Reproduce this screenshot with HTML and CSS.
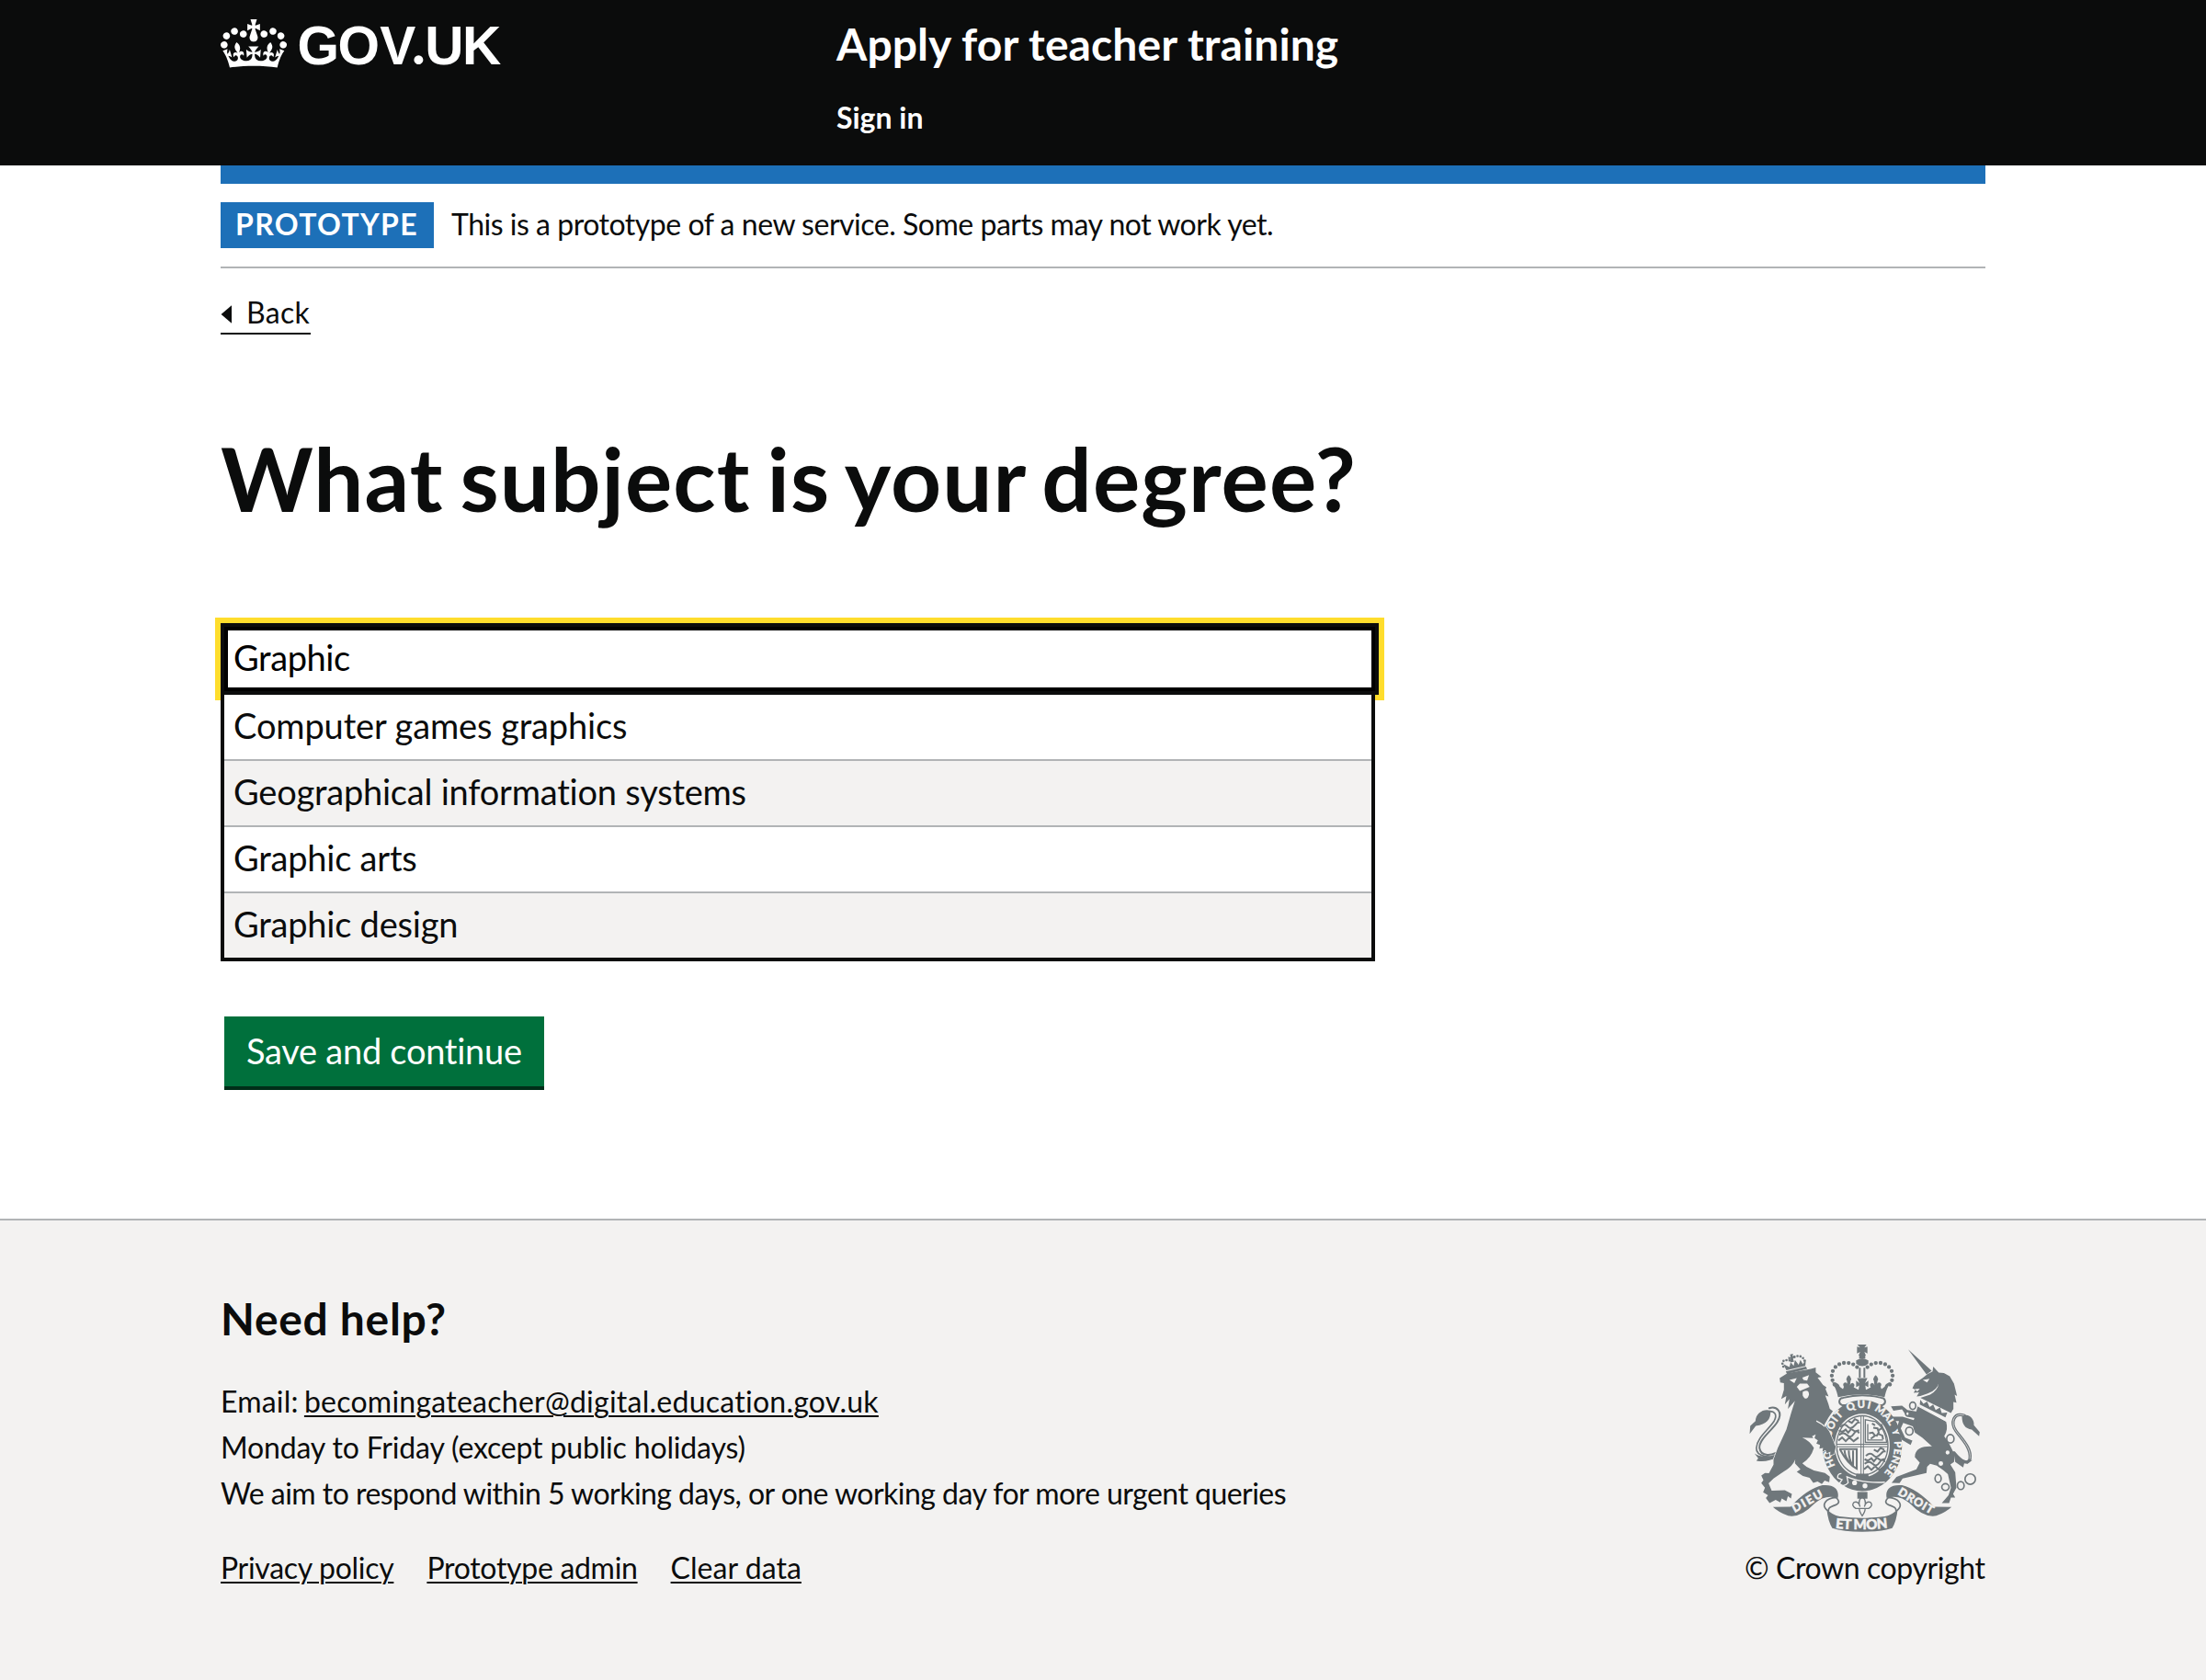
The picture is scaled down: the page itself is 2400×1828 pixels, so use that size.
FILE: index.html
```html
<!DOCTYPE html>
<html lang="en">
<head>
<meta charset="utf-8">
<title>What subject is your degree? - Apply for teacher training</title>
<link rel="stylesheet" href="styles.css">
</head>
<body>
<header class="header">
  <div class="container header-grid">
    <a class="logo" href="#">
      <svg class="logo-crown" viewBox="0 0 132 97" aria-hidden="true"><path fill="currentColor" fill-rule="evenodd" d="M25 30.2c3.5 1.5 7.7-.2 9.1-3.7 1.5-3.6-.2-7.8-3.9-9.2-3.6-1.4-7.6.3-9.1 3.9-1.4 3.5.3 7.5 3.9 9zM9 39.5c3.6 1.5 7.8-.2 9.2-3.7 1.5-3.6-.2-7.8-3.9-9.1-3.6-1.5-7.6.2-9.1 3.8-1.4 3.5.3 7.5 3.8 9zM4.4 57.2c3.5 1.5 7.7-.2 9.1-3.8 1.5-3.6-.2-7.7-3.9-9.1-3.5-1.5-7.6.3-9.1 3.8-1.4 3.5.3 7.6 3.9 9.1zm38.3-21.4c3.5 1.5 7.7-.2 9.1-3.8 1.5-3.6-.2-7.7-3.9-9.1-3.6-1.5-7.6.3-9.1 3.8-1.3 3.6.4 7.7 3.9 9.1zm64.4-5.6c-3.6 1.5-7.8-.2-9.1-3.7-1.5-3.6.2-7.8 3.8-9.2 3.6-1.4 7.7.3 9.2 3.9 1.3 3.5-.4 7.5-3.9 9zm15.9 9.3c-3.6 1.5-7.7-.2-9.1-3.7-1.5-3.6.2-7.8 3.7-9.1 3.6-1.5 7.7.2 9.2 3.8 1.5 3.5-.3 7.5-3.8 9zm4.7 17.7c-3.6 1.5-7.8-.2-9.2-3.8-1.5-3.6.2-7.7 3.9-9.1 3.6-1.5 7.7.3 9.2 3.8 1.3 3.5-.4 7.6-3.9 9.1zM89.3 35.8c-3.6 1.5-7.8-.2-9.2-3.8-1.4-3.6.2-7.7 3.9-9.1 3.6-1.5 7.7.3 9.2 3.8 1.4 3.6-.3 7.7-3.9 9.1zM69.7 17.7l8.9 4.7V9.3l-8.9 2.8c-.2-.3-.5-.6-.9-.9L72.4 0H59.6l3.5 11.2c-.3.3-.6.5-.9.9l-8.8-2.8v13.1l8.8-4.7c.3.3.6.7.9.9l-5 15.4v.1c-.2.8-.4 1.6-.4 2.4 0 4.1 3.1 7.5 7 8.1h.2c.3 0 .7.1 1 .1.4 0 .7 0 1-.1h.2c4-.6 7.1-4.1 7.1-8.1 0-.8-.1-1.7-.4-2.4V34l-5.1-15.4c.4-.2.7-.6 1-.9zM66 92.8c16.9 0 32.8 1.1 47.1 3.2 4-16.9 8.9-26.7 14-33.5l-9.6-3.4c1 4.9 1.1 7.2 0 10.2-1.5-1.4-3-4.3-4.2-8.7L108.6 76c2.8-2 5-3.2 7.5-3.3-4.4 9.4-10 11.9-13.6 11.2-4.3-.8-6.3-4.6-5.6-7.9 1-4.7 5.7-5.9 8-.5 4.3-8.7-3-11.4-7.6-8.8 7.1-7.2 7.9-13.5 2.1-21.1-8 6.1-8.1 12.3-4.5 20.8-4.7-5.4-12.1-2.5-9.5 6.2 3.4-5.2 7.9-2 7.2 3.1-.6 4.3-6.4 7.8-13.5 7.2-10.3-.9-10.9-8-11.2-13.8 2.5-.5 7.1 1.8 11 7.3L80.2 60c-4.1 4.4-8 5.3-12.3 5.4 1.4-4.4 8-11.6 8-11.6H55.5s6.4 7.2 7.9 11.6c-4.2-.1-8-1-12.3-5.4l1.4 16.4c3.9-5.5 8.5-7.7 10.9-7.3-.3 5.8-.9 12.8-11.1 13.8-7.2.6-12.9-2.9-13.5-7.2-.7-5 3.8-8.3 7.1-3.1 2.7-8.7-4.6-11.6-9.4-6.2 3.7-8.5 3.6-14.7-4.6-20.8-5.8 7.6-5 13.9 2.2 21.1-4.7-2.6-11.9.1-7.7 8.8 2.3-5.5 7.1-4.2 8.1.5.7 3.3-1.3 7.1-5.7 7.9-3.5.7-9-1.8-13.5-11.2 2.5.1 4.7 1.3 7.5 3.3l-4.7-15.4c-1.2 4.4-2.7 7.2-4.3 8.7-1.1-3-.9-5.3 0-10.2l-9.5 3.4c5 6.9 9.9 16.7 14 33.5 14.8-2.1 30.8-3.2 47.7-3.2z"/></svg>
      <svg class="logo-name" viewBox="0 -12 230 84"><text class="logo-text" y="48.8" x="1.6 45.5 91.3 126.2 140.2 181">GOV<tspan class="logo-dot">.</tspan>UK</text></svg>
    </a>
    <div>
      <a class="service-name" href="#">Apply for teacher training</a>
      <nav><a class="nav-link" href="#">Sign in</a></nav>
    </div>
  </div>
</header>

<div class="container">
  <div class="bar"></div>
  <div class="phase"><strong class="tag">PROTOTYPE</strong><span class="phase-text">This is a prototype of a new service. Some parts may not work yet.</span></div>
  <a class="back" href="#"><svg class="back-arrow" viewBox="0 0 12 20" aria-hidden="true"><path fill="currentColor" d="M12 .3v19.4L.6 10z"/></svg><span>Back</span></a>
  <main>
    <h1 class="title">What subject is your degree?</h1>
    <div class="autocomplete">
      <input class="field" type="text" value="Graphic" aria-label="Subject">
      <ul class="menu">
        <li class="option option-first">Computer games graphics</li>
        <li class="option">Geographical information systems</li>
        <li class="option">Graphic arts</li>
        <li class="option">Graphic design</li>
      </ul>
    </div>
    <button class="button" type="button">Save and continue</button>
  </main>
</div>

<footer class="footer">
  <div class="container footer-grid">
    <div>
      <h2 class="help">Need help?</h2>
      <div class="contact">
        <p><span class="mail-label">Email:</span> <a class="link mail" href="#">becomingateacher@digital.education.gov.uk</a></p>
        <p class="hours">Monday to Friday (except public holidays)</p>
        <p class="respond">We aim to respond within 5 working days, or one working day for more urgent queries</p>
      </div>
      <nav class="links"><a class="link" href="#">Privacy policy</a><a class="link" href="#">Prototype admin</a><a class="link link-clear" href="#">Clear data</a></nav>
    </div>
    <div class="copyright">
      <svg class="arms" viewBox="60 60 780 640" aria-hidden="true">
        <defs>
          <path id="motto" d="M438 525A105 123 0 0 1 333 402A105 123 0 0 1 438 279A105 123 0 0 1 543 402A105 123 0 0 1 438 525"/>
          <path id="scroll" d="M350 672Q438 682 530 670"/>
          <path id="half" d="M421 146C405 128 368 126 350 146C332 166 336 192 356 214"/>
        </defs>
        <!-- royal crown -->
        <path class="g" d="M422 72h30l-7 10 10-3v22l-10-5 5 12h-24l5-12-10 5V79l10 3zM428 106h20v12h-20zM418 124q20-12 40 0v10q-20 18-40 0zM427 148h6v32h-6zM442 148h6v32h-6z"/>
        <use href="#half" class="beads"/><use href="#half" class="beads" transform="matrix(-1 0 0 1 876 0)"/>
        <path class="g" d="M345 196q15 0 20 14l10 8 3-8q-6-12 4-14 8 0 8 10l-2-16q-6-8 6-18 12 10 6 18l-2 16q2-10 10-8 8 4 2 14l16 8 2-14-10 6v-22l11 8-8-16h34l-8 16 11-8v22l-10-6 2 14 16-8q-6-10 2-14 8-2 10 8l-2-16q-6-8 6-18 12 10 6 18l-2 16q0-10 8-10 10 2 4 14l3 8 10-8q5-14 20-14-14 18-20 48-76-18-152 0-6-30-20-48z"/>
        <path class="l" d="M372 270c-14-6-10-24 4-24q62-16 124 0c14 0 18 18 4 24z" stroke-width="6"/>
        <!-- garter and shield -->
        <path class="g" fill-rule="evenodd" d="M438 253a130 149 0 1 0 .1 0zM438 298a90 104 0 1 1-.1 0z"/>
        <path class="l" stroke-width="4" d="M438 305a84 97 0 1 0 .1 0z"/>
        <path class="l" stroke-width="3" d="M434 306v190M442 306v190M354 398h168M354 406h168"/>
        <g id="lions"><path class="l" stroke-width="6" d="M366 342q14-14 24-2t24-4 14-6M362 352q10 10 22-2l8 10 10-12 12 8 14-4M362 368q14-12 26 0t22-4 18-2M360 386l12-10 12 12 12-12 14 12 16-12M392 322l12 6 10-12 12 6"/></g>
        <use href="#lions" transform="translate(84 94)"/>
        <path class="l" stroke-width="4" d="M448 318v74h70q-4-44-36-68zM456 332v52h50"/>
        <path class="l" stroke-width="6" d="M466 380l14-10-8-10-12 2M474 344l14 2 4 14-8 12M492 352l12-8-4-12M490 364l14 6 2 12M470 330l10 6"/>
        <path class="l" stroke-width="6" d="M366 414h54v64q-30-16-54-62zM380 418q2 24 18 40M394 418q0 28 12 48M408 418v54"/>
        <path class="g" d="M420 494l36 0 6 16h-48z"/>
        <path class="w" d="M370 494q-14 0-12 14l14 6-10 14q16 12 30-4l-4-20q50 22 124 18" stroke-width="4"/>
        <circle class="f" cx="413" cy="524" r="8"/><circle class="f" cx="447" cy="534" r="8"/>
        <g class="motto"><text><textPath href="#motto" startOffset="110" textLength="54">HO</textPath></text>
        <text><textPath href="#motto" startOffset="208" textLength="84">SOIT</textPath></text>
        <text><textPath href="#motto" startOffset="310" textLength="74">QUI</textPath></text>
        <text><textPath href="#motto" startOffset="398" textLength="74">MAL</textPath></text>
        <text><textPath href="#motto" startOffset="485">Y</textPath></text>
        <text><textPath href="#motto" startOffset="524" textLength="112">PENSE</textPath></text></g>
        <!-- lion -->
        <g transform="translate(30 60)">
          <path class="s" stroke-width="6" d="M150 350C110 384 76 376 72 350C70 322 114 292 130 266C152 230 126 212 104 220"/>
          <path class="s" stroke-width="5" d="M140 372C112 388 60 378 62 350C64 316 102 290 120 262C132 240 120 230 106 230"/>
          <path class="g" d="M108 228C86 220 60 236 59 262L42 278 40 304 60 278Q112 270 108 228zM128 370Q84 386 56 368L68 384 62 392Q98 398 130 380z"/>
          <path class="g halo" d="M138 122L163 106 240 92 256 87V103L275 118 262 120 280 144 291 152 288 158 298 182 287 178 297 205 302 222 312 230 298 250 284 274 300 296 314 328 318 340 322 345 316 370 303 374 304 362 292 368 288 357 278 362 280 350 268 352 270 340 258 336 263 325 252 318 256 306 244 312 248 318 212 316Q236 326 250 350 240 384 212 400L226 412 250 424 286 432 302 444 300 462 285 457 276 468 262 460 248 464 236 448 214 442 194 428 206 420 188 400 192 352Q200 400 150 428L118 450 102 466 112 490 155 488 178 500 175 515 165 508 160 524 145 515 140 528 125 520 105 530 93 514 100 505 84 495 90 480 78 465 85 455 78 440 90 432 103 433 118 405 118 388 132 350 160 290 176 234 188 196 165 222 170 190 155 208 160 180 143 190 152 160 152 138 140 136z"/>
          <path class="w" stroke-width="4" d="M258 262q16 8 28 18"/>
          <path class="f" d="M170 128l24-6-8 16zM212 120l22-8-6 18-12-2zM194 150l10-10 24 0 8 10-14 6-18 8zM214 166q20-10 20 10-4 16-14 12-10-8-6-22z"/>
          <path class="g" d="M150 76l10 20 62-14 2-22-10 16-8-14-6 16-12-16-4 20-10-12-4 16zM158 100l66-16 4 8-66 16zM172 44l10-2-2 8 8-2 1 8-8 0 4 12-12 2 0-12-6 4-1-10 8 2z"/>
          <path class="beads small" d="M150 84C142 68 150 60 172 64M178 58C196 42 220 50 220 72"/>
        </g>
        <!-- unicorn -->
        <g transform="translate(420 60)">
          <path class="s" stroke-width="10" d="M352 244C316 232 306 268 324 294C342 320 376 350 370 386C364 404 344 398 318 366"/>
          <path class="w" stroke-width="2" d="M352 244C316 232 306 268 324 294C342 320 376 350 370 386"/>
          <path class="g" d="M344 248C362 232 386 254 383 276L402 298 400 312 376 290Q344 286 344 248zM318 372L352 392 378 390 362 402 352 398 348 414 322 396z"/>
          <path class="g" d="M168 28L245 98 228 110zM182 155L190 138 215 122 232 108 248 100 250 84 268 104 285 105 304 116 318 140 328 180 320 176 326 202 316 200 316 222 308 236 208 186 240 176Q266 160 268 138 264 160 232 172L208 180 196 182 204 168 186 170 192 160z"/>
          <path class="g" d="M200 212L292 264Q300 290 286 312L302 336 320 372 318 396 306 404 322 430 326 480 315 500 322 512 308 512 302 530 278 530 300 505 308 480 298 436 284 424 262 408 240 402 230 412 228 432 150 450 140 465 114 464 130 445 195 420 206 398 190 380C190 352 215 344 246 345L214 316 190 300 182 275z"/>
          <path class="g" d="M198 254L164 248 148 224 120 228 112 214 148 212 166 226 202 232zM196 284L152 268 144 286 158 316 182 326 176 340 148 324 132 284 138 262 124 262 116 248 150 248 196 262z"/>
          <path class="w" stroke-width="4" d="M206 190L302 240 292 262 202 214z"/>
          <path class="g" d="M208 192l10 14 12-8 8 18 12-8 8 18 14-8 6 18 18-2-6 16-84-42z"/>
          <path class="f" d="M216 128l22-4-8 12zM190 158l16-2-8 10z"/>
          <g class="ring"><ellipse cx="183" cy="212" rx="10" ry="12"/><ellipse cx="166" cy="238" rx="6" ry="7"/><ellipse cx="172" cy="295" rx="12" ry="13"/><ellipse cx="306" cy="320" rx="12" ry="14"/><ellipse cx="297" cy="365" rx="9" ry="9"/><ellipse cx="275" cy="401" rx="10" ry="10"/><ellipse cx="266" cy="450" rx="10" ry="13"/><ellipse cx="290" cy="478" rx="12" ry="11"/><ellipse cx="340" cy="473" rx="11" ry="13"/><circle cx="371" cy="452" r="17"/></g>
        </g>
        <!-- scroll -->
        <path class="l" stroke-width="5" d="M352 572C362 580 366 590 352 596C330 604 326 606 328 618M352 572C320 574 300 596 326 616M524 572C514 580 510 590 524 596C546 604 550 606 548 618M524 572C556 574 576 596 550 616"/>
        <path class="g" d="M146 603L204 602Q258 544 308 532C348 528 364 548 358 574Q318 560 282 592 236 640 196 632 164 620 146 603zM730 603L672 602Q618 544 568 532C528 528 512 548 518 574Q558 560 594 592 640 640 680 632 712 620 730 603zM322 610Q340 630 364 634 438 644 512 634 536 630 554 610 550 650 536 672 500 684 438 684 376 684 340 672 326 650 322 610z"/>
        <text class="scroll" x="258" y="597" text-anchor="middle" textLength="108" transform="rotate(-29 258 584)">DIEU</text>
        <text class="scroll" x="614" y="596" text-anchor="middle" textLength="128" transform="rotate(31 614 583)">DROIT</text>
        <text class="scroll scroll-base"><textPath href="#scroll" textLength="172">ET MON</textPath></text>
        <!-- fleur-de-lis -->
        <path class="g" d="M422 554h33v22h-33z"/>
        <path class="l" stroke-width="4" d="M438 568q-16 16-7 34-6-20-20-14-10 10 6 20h12q-2 8 9 24 11-16 9-24h12q16-10 6-20-14-6-20 14 9-18-7-34zM426 608h24"/>
      </svg>
      <a class="copyright-text" href="#">© Crown copyright</a>
    </div>
  </div>
</footer>
</body>
</html>
```
FILE: styles.css
```css
* { box-sizing: border-box; }
body { margin: 0; background: #fff; color: #0b0c0c; font-family: Lato, "Noto Sans", sans-serif; font-size: 32px; line-height: 50px; }
a { color: inherit; text-decoration: none; }
h1, h2, p, ul { margin: 0; padding: 0; font-weight: inherit; }
svg { display: block; }
.container { width: 1920px; margin: 0 auto; }

.header { height: 180px; background: #0b0c0c; color: #fff; font-weight: 700; }
.header-grid { display: grid; grid-template-columns: 670px 1fr; padding-top: 18px; }
.logo { display: flex; align-items: flex-start; gap: 10px; padding-top: 3px; }
.logo-crown { width: 72px; height: 53px; }
.logo-name { width: 230px; height: 84px; margin-top: -12px; }
.logo-text { fill: #fff; font: 700 58.5px "Liberation Sans", Arial, sans-serif; }
.logo-dot { font-family: Lato, sans-serif; font-weight: 900; font-size: 60px; }
.service-name { display: block; font-size: 48px; line-height: 60px; letter-spacing: .09px; }
.nav-link { display: block; margin-top: 30px; line-height: 40px; }

.bar { height: 20px; background: #1d70b8; }
.phase { display: flex; gap: 19px; padding: 20px 0; border-bottom: 2px solid #b1b4b6; line-height: 48px; }
.tag { width: 232px; height: 50px; padding-left: 16px; background: #1d70b8; color: #fff; letter-spacing: 1.35px; }
.phase-text { letter-spacing: -.48px; }
.back { display: flex; align-items: flex-start; gap: 16px; width: 98px; height: 44px; margin-top: 28px; border-bottom: 2px solid #0b0c0c; line-height: 40px; letter-spacing: .3px; }
.back-arrow { width: 12px; height: 20px; margin-top: 12px; }

.title { margin-top: 106px; font-size: 96px; line-height: 100px; font-weight: 700; letter-spacing: 1.1px; word-spacing: -6.5px; }
.autocomplete { margin-top: 108px; font-size: 38px; letter-spacing: -.22px; }
.field { display: block; width: 1260px; height: 78px; padding: 0 0 4px 10px; border: 4px solid #0b0c0c; border-radius: 0; outline: 0; background: #fff; box-shadow: inset 0 0 0 4px #000, 0 0 0 6px #ffdd2c; color: #000; font: inherit; letter-spacing: -.4px; }
.menu { position: relative; width: 1256px; border: 4px solid #0b0c0c; border-top: 0; background: #fff; list-style: none; }
.option { height: 72px; padding-left: 10px; border-bottom: 2px solid #b1b4b6; line-height: 67px; }
.option-first { letter-spacing: -.12px; }
.option:nth-child(even) { background: #f3f2f1; }
.option:last-child { height: 70px; border-bottom: 0; }
.button { display: block; width: 348px; height: 76px; margin: 60px 0 0 4px; padding: 0 0 2px 24px; border: 0; background: #00703c; box-shadow: 0 4px 0 #002d18; color: #fff; font: inherit; font-size: 38px; letter-spacing: -.27px; text-align: left; }

.footer { height: 502px; margin-top: 144px; padding-top: 77px; border-top: 2px solid #b1b4b6; background: #f3f2f1; }
.footer-grid { display: grid; grid-template-columns: 1fr 262px; align-items: end; }
.help { font-size: 48px; line-height: 60px; font-weight: 700; letter-spacing: .69px; }
.contact { margin-top: 35px; }
.mail-label { letter-spacing: .2px; }
.mail { margin-left: -2px; letter-spacing: .25px; }
.hours { letter-spacing: -.16px; }
.respond { letter-spacing: -.53px; }
.links { display: flex; gap: 36px; margin-top: 36px; line-height: 40px; letter-spacing: -.3px; }
.link { text-decoration: underline; text-decoration-thickness: 2px; text-underline-offset: 3px; }
.link-clear { letter-spacing: .04px; }
.copyright { line-height: 40px; }
.arms { width: 260px; height: 213px; margin: 0 0 14px 2px; }
.copyright-text { display: block; letter-spacing: -.4px; white-space: nowrap; }

.g { fill: #6f777b; }
.f { fill: #f3f2f1; }
.l { fill: none; stroke: #6f777b; }
.s { fill: none; stroke: #6f777b; stroke-linecap: round; }
.w { fill: none; stroke: #f3f2f1; }
.halo { stroke: #f3f2f1; stroke-width: 4; paint-order: stroke; }
.beads { fill: none; stroke: #6f777b; stroke-width: 13; stroke-linecap: round; stroke-dasharray: 0 15.5; }
.small { stroke-width: 8; stroke-dasharray: 0 10; }
.ring { fill: #f3f2f1; stroke: #6f777b; stroke-width: 5; }
.motto { fill: #f3f2f1; stroke: #f3f2f1; stroke-width: 1; font-weight: 900; font-size: 34px; letter-spacing: 0; }
.scroll { fill: #f3f2f1; stroke: #f3f2f1; stroke-width: 1.5; font-weight: 900; font-size: 38px; }
.scroll-base { font-size: 45px; }
```
